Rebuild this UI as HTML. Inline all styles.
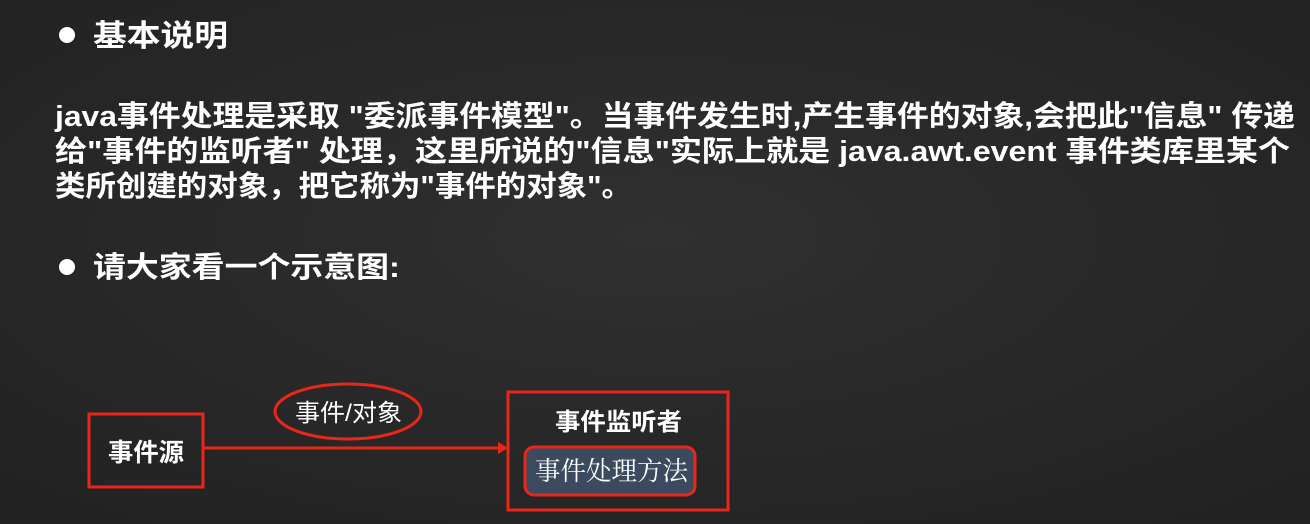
<!DOCTYPE html>
<html><head><meta charset="utf-8"><style>
html,body{margin:0;padding:0;width:1310px;height:524px;overflow:hidden;background:#2b2b2b;}
svg{display:block}
</style></head><body>
<svg width="1310" height="524" viewBox="0 0 1310 524" xmlns="http://www.w3.org/2000/svg">
<defs>
<radialGradient id="bg" cx="50%" cy="45%" r="75%">
<stop offset="0" stop-color="#303030"/><stop offset="1" stop-color="#212121"/>
</radialGradient>
</defs>
<rect width="1310" height="524" fill="url(#bg)"/>
<g fill="#fff" font-family="'Liberation Sans','Noto Sans CJK SC',sans-serif" font-weight="bold">
<circle cx="67" cy="35" r="8"/>
<text x="93" y="46" font-size="30" textLength="135" lengthAdjust="spacingAndGlyphs">基本说明</text>
<text x="55" y="126" font-size="29" textLength="1240" lengthAdjust="spacingAndGlyphs">java事件处理是采取 "委派事件模型"。当事件发生时,产生事件的对象,会把此"信息" 传递</text>
<text x="55" y="161" font-size="29" textLength="1235" lengthAdjust="spacingAndGlyphs">给"事件的监听者" 处理，这里所说的"信息"实际上就是 java.awt.event 事件类库里某个</text>
<text x="55" y="196" font-size="29" textLength="577" lengthAdjust="spacingAndGlyphs">类所创建的对象，把它称为"事件的对象"。</text>
<circle cx="67" cy="267" r="8"/>
<text x="93" y="277" font-size="29" textLength="307" lengthAdjust="spacingAndGlyphs">请大家看一个示意图:</text>
</g>
<g fill="none" stroke="#e8261a" stroke-width="3">
<rect x="89" y="414" width="114" height="73"/>
<line x1="203" y1="448" x2="500" y2="448"/>
<ellipse cx="348" cy="411.5" rx="73" ry="27.5"/>
<rect x="508" y="392" width="220" height="118"/>
</g>
<polygon points="498,442 508,448 498,454" fill="#e8261a"/>
<rect x="525" y="447" width="170" height="48" rx="9" fill="#3b4a5e" stroke="#e8261a" stroke-width="3"/>
<g fill="#fff" font-family="'Liberation Sans','Noto Sans CJK SC',sans-serif">
<text x="108" y="461" font-size="25" font-weight="bold" textLength="76" lengthAdjust="spacingAndGlyphs">事件源</text>
<text x="295" y="421" font-size="24" textLength="107" lengthAdjust="spacingAndGlyphs">事件/对象</text>
<text x="555" y="430" font-size="24" font-weight="bold" textLength="127" lengthAdjust="spacingAndGlyphs">事件监听者</text>
<text x="535" y="480" font-size="26" font-family="'Liberation Serif','Noto Serif CJK SC',serif" textLength="153" lengthAdjust="spacingAndGlyphs">事件处理方法</text>
</g>
</svg>
</body></html>
